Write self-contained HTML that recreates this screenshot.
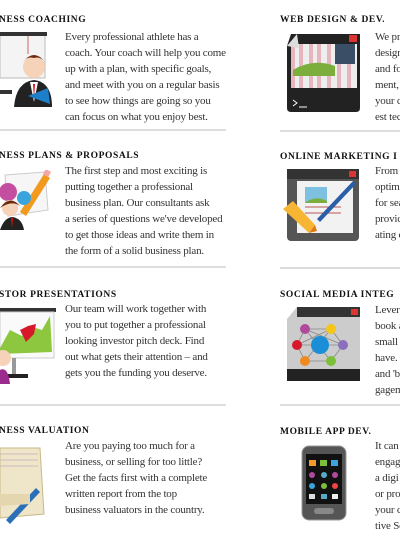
<!DOCTYPE html>
<html><head><style>
body{margin:0;width:400px;height:550px;overflow:hidden;background:#fff;position:relative;font-family:"Liberation Serif",serif;color:#222}
.h{position:absolute;font-size:9.5px;font-weight:bold;letter-spacing:0.6px;white-space:nowrap;color:#111}
.t{position:absolute;font-size:11px;line-height:16px;white-space:nowrap;letter-spacing:-0.2px;color:#333}
.hr{position:absolute;height:2px;background:#ddd}
svg{position:absolute}
</style></head><body>
<div class="h" style="left:-1px;top:15px">NESS COACHING</div>
<div class="t" style="left:65px;top:29px">Every professional athlete has a<br>coach. Your coach will help you come<br>up with a plan, with specific goals,<br>and meet with you on a regular basis<br>to see how things are going so you<br>can focus on what you enjoy best.</div>
<div class="hr" style="left:0;top:129px;width:226px"></div>

<div class="h" style="left:-1px;top:151px">NESS PLANS &amp; PROPOSALS</div>
<div class="t" style="left:65px;top:163px">The first step and most exciting is<br>putting together a professional<br>business plan. Our consultants ask<br>a series of questions we've developed<br>to get those ideas and write them in<br>the form of a solid business plan.</div>
<div class="hr" style="left:0;top:266px;width:226px"></div>

<div class="h" style="left:-1px;top:290px">STOR PRESENTATIONS</div>
<div class="t" style="left:65px;top:301px">Our team will work together with<br>you to put together a professional<br>looking investor pitch deck. Find<br>out what gets their attention – and<br>gets you the funding you deserve.</div>
<div class="hr" style="left:0;top:404px;width:226px"></div>

<div class="h" style="left:-1px;top:426px">NESS VALUATION</div>
<div class="t" style="left:65px;top:438px">Are you paying too much for a<br>business, or selling for too little?<br>Get the facts first with a complete<br>written report from the top<br>business valuators in the country.</div>

<div class="h" style="left:280px;top:15px">WEB DESIGN &amp; DEV.</div>
<div class="t" style="left:375px;top:29px">We pr<br>design<br>and fo<br>ment,<br>your c<br>est tec</div>
<div class="hr" style="left:280px;top:130px;width:120px"></div>
<div class="h" style="left:280px;top:152px">ONLINE MARKETING I</div>
<div class="t" style="left:375px;top:163px">From<br>optim<br>for sea<br>provic<br>ating c</div>
<div class="hr" style="left:280px;top:267px;width:120px"></div>
<div class="h" style="left:280px;top:290px">SOCIAL MEDIA INTEG</div>
<div class="t" style="left:375px;top:302px">Lever<br>book a<br>small b<br>have. V<br>and 'b<br>gagem</div>
<div class="hr" style="left:280px;top:404px;width:120px"></div>
<div class="h" style="left:280px;top:427px">MOBILE APP DEV.</div>
<div class="t" style="left:375px;top:438px">It can<br>engag<br>a digi<br>or pro<br>your c<br>tive Se</div>

<svg style="left:0;top:32px" width="60" height="80"><rect x="0" y="3" width="45" height="43" fill="#f4f4f4" stroke="#bbb"/><rect x="0" y="0" width="47" height="4" fill="#333"/><line x1="28" y1="4" x2="28" y2="22" stroke="#c66"/><circle cx="34" cy="35" r="11" fill="#f5d2b8"/><path d="M23 30 Q34 16 45 30 Q40 24 34 26 Q27 24 23 30Z" fill="#6b2a10"/><path d="M14 75 Q16 50 34 48 Q52 50 52 75Z" fill="#222"/><path d="M30 50 L34 70 L38 50Z" fill="#fff"/><path d="M33 52 L34 68 L35 52Z" fill="#d11"/><path d="M28 64 L48 56 L50 72 Z" fill="#1c7fc7"/><rect x="0" y="58" width="12" height="4" fill="#333"/></svg>
<svg style="left:0;top:170px" width="60" height="80"><path d="M5 5 L45 2 L48 40 L8 46Z" fill="#f6f6f6" stroke="#ccc"/><path d="M20 42 L44 4 L50 8 L26 46Z" fill="#f29a1e"/><rect x="44" y="0" width="6" height="6" fill="#f3a6a6" transform="rotate(30 47 3)"/><circle cx="8" cy="22" r="9" fill="#c44fa0"/><circle cx="24" cy="28" r="7" fill="#3aa4dd"/><circle cx="10" cy="38" r="8" fill="#f5d2b8"/><path d="M0 38 Q10 24 20 36 Q12 30 0 38Z" fill="#6b2a10"/><path d="M0 60 Q4 48 12 47 Q22 48 24 60Z" fill="#222"/><path d="M11 48 L12 58 L13 48Z" fill="#d11"/></svg>
<svg style="left:0;top:308px" width="60" height="80"><rect x="0" y="0" width="56" height="4" fill="#333"/><rect x="0" y="4" width="54" height="46" fill="#fafafa" stroke="#ccc"/><path d="M0 40 L10 22 L22 28 L30 18 L42 22 L50 8 L52 44 L0 46Z" fill="#8dc63f"/><path d="M20 22 L26 34 L34 26 L36 16 L28 18Z" fill="#d6182a"/><rect x="12" y="50" width="4" height="18" fill="#999"/><rect x="6" y="66" width="22" height="4" fill="#222"/><circle cx="3" cy="50" r="8" fill="#f5d2b8"/><path d="M0 62 Q8 58 10 76 L0 76Z" fill="#9b2b8c"/></svg>
<svg style="left:0;top:444px" width="60" height="90"><path d="M0 4 L40 4 L44 70 L0 74Z" fill="#efe5c8" stroke="#c8b98a"/><path d="M0 10 L38 10 M0 16 L38 16 M0 22 L38 22" stroke="#cbb" /><path d="M6 76 L36 44 L40 48 L10 80Z" fill="#2a6fb8"/><path d="M0 50 L30 50 L30 60 L0 62Z" fill="#e4d7b0"/></svg>

<svg style="left:283px;top:32px" width="80" height="80"><path d="M8 2 L77 2 L77 76 Q77 80 73 80 L8 80 Q4 80 4 76 L4 14Z" fill="#222"/><rect x="8" y="12" width="66" height="44" fill="#eee"/><path d="M10 12 v44 M18 12 v44 M28 12 v44 M36 12 v44 M46 12 v44 M56 12 v44 M66 12 v44" stroke="#e6b5bd" stroke-width="4"/><path d="M10 38 Q30 26 52 34 L52 44 L10 44Z" fill="#7cae3d"/><rect x="52" y="12" width="20" height="20" fill="#3a4e66"/><rect x="66" y="3" width="8" height="7" fill="#d33"/><path d="M4 14 L14 2 L16 16Z" fill="#ddd"/><path d="M10 68 l4 3 l-4 3 M16 75 h8" stroke="#fff" fill="none"/></svg>
<svg style="left:283px;top:167px" width="80" height="80"><rect x="4" y="2" width="72" height="72" rx="4" fill="#555"/><rect x="4" y="2" width="72" height="10" fill="#333"/><rect x="66" y="4" width="7" height="6" fill="#d33"/><rect x="14" y="14" width="56" height="52" fill="#f2f2f2"/><rect x="22" y="20" width="22" height="16" fill="#7ec0e0"/><path d="M22 36 Q32 28 44 34 L44 36Z" fill="#7cae3d"/><path d="M22 40 h36 M22 46 h36" stroke="#b55" /><path d="M34 52 L70 14 L73 17 L37 55Z" fill="#2a5fa8"/><path d="M0 42 L10 34 L32 58 L26 66Z" fill="#f7b534"/><path d="M26 66 L32 58 L34 64Z" fill="#e07a10"/></svg>
<svg style="left:283px;top:305px" width="80" height="80"><path d="M14 2 L77 2 L77 76 L4 76 L4 14Z" fill="#ccc"/><rect x="14" y="2" width="63" height="10" fill="#333"/><rect x="68" y="4" width="7" height="6" fill="#d33"/><rect x="4" y="64" width="73" height="12" fill="#222"/><path fill="none" stroke="#888" stroke-width="0.8" d="M22 24 L48 24 L60 40 L48 56 L22 56 L14 40Z M22 24 L48 56 M48 24 L22 56 M14 40 L60 40 M22 24 L60 40 M14 40 L48 24"/><circle cx="22" cy="24" r="5" fill="#b04a9b"/><circle cx="48" cy="24" r="5" fill="#f5c518"/><circle cx="60" cy="40" r="5" fill="#8a6fbf"/><circle cx="48" cy="56" r="5" fill="#7cbf3a"/><circle cx="22" cy="56" r="5" fill="#f08a20"/><circle cx="14" cy="40" r="5" fill="#d6182a"/><circle cx="37" cy="40" r="9" fill="#1a8fd8"/></svg>
<svg style="left:300px;top:444px" width="50" height="80"><rect x="2" y="2" width="44" height="74" rx="7" fill="#555" stroke="#999"/><rect x="6" y="10" width="36" height="50" fill="#111"/><g><rect x="9" y="16" width="7" height="6" fill="#f49a2a"/><rect x="20" y="16" width="7" height="6" fill="#7cbf3a"/><rect x="31" y="16" width="7" height="6" fill="#3aa4dd"/><circle cx="12" cy="31" r="3" fill="#b04a9b"/><circle cx="24" cy="31" r="3" fill="#5ac"/><circle cx="35" cy="31" r="3" fill="#b04a9b"/><circle cx="12" cy="42" r="3" fill="#3aa4dd"/><circle cx="24" cy="42" r="3" fill="#7cbf3a"/><circle cx="35" cy="42" r="3" fill="#e44"/><rect x="9" y="50" width="6" height="5" fill="#ddd"/><rect x="21" y="50" width="6" height="5" fill="#5ac"/><rect x="32" y="50" width="6" height="5" fill="#eee"/></g><rect x="14" y="64" width="20" height="6" rx="3" fill="#888"/></svg>
</body></html>
